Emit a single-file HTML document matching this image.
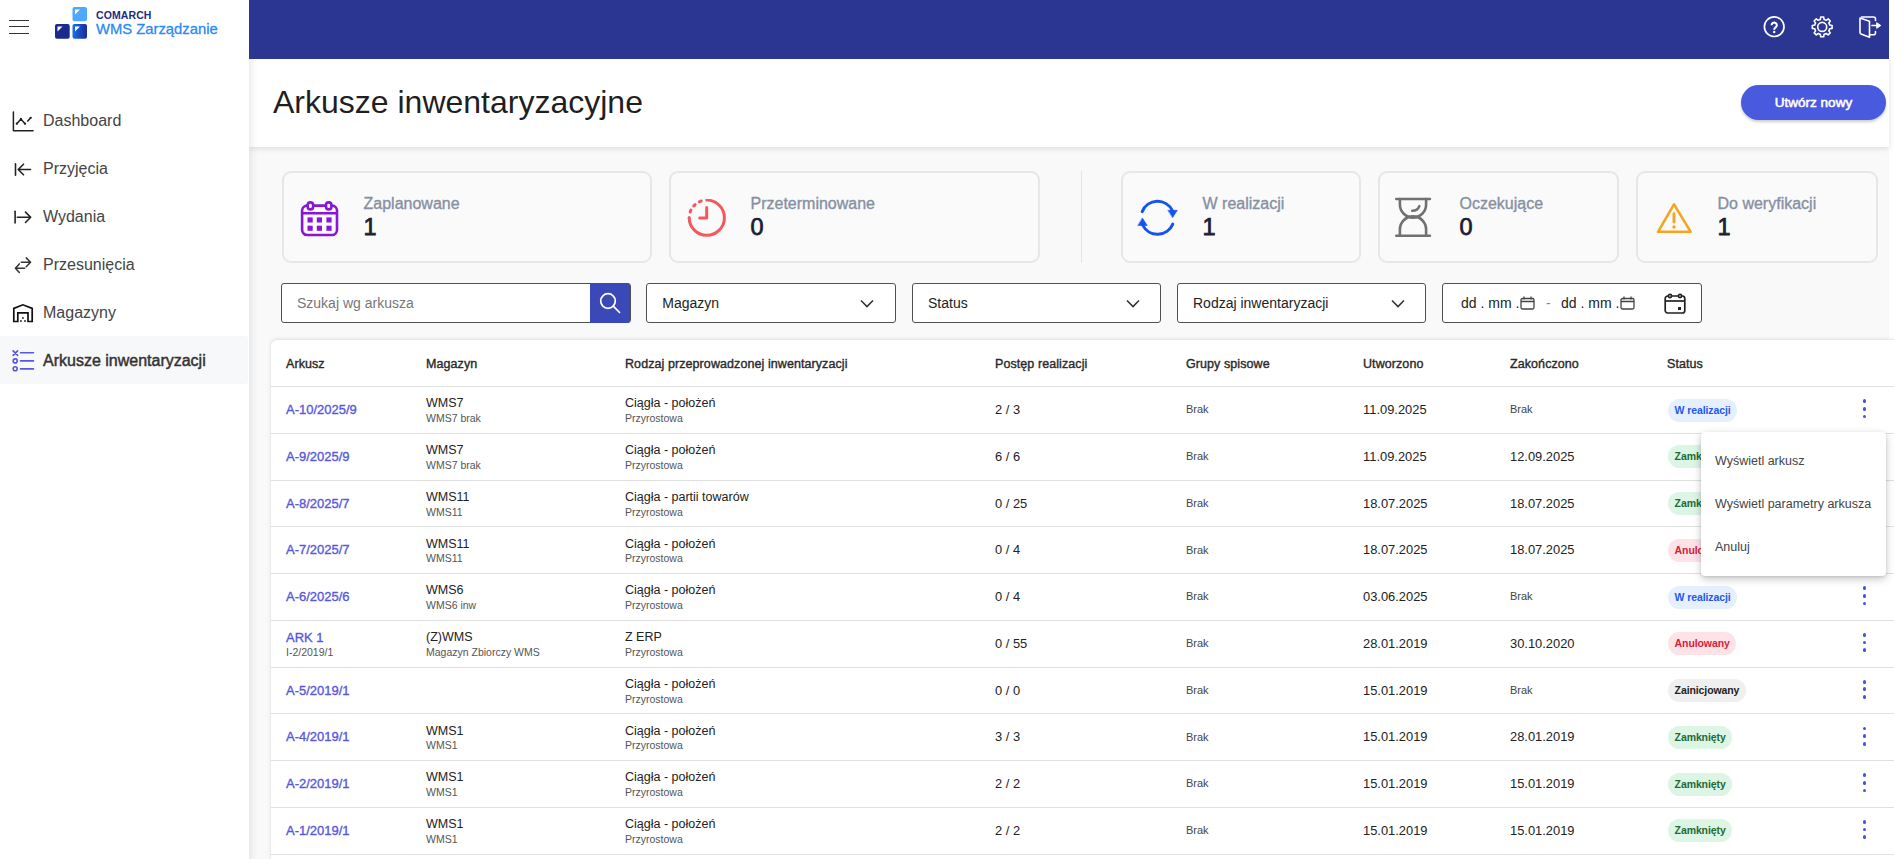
<!DOCTYPE html>
<html><head><meta charset="utf-8">
<style>
*{box-sizing:border-box;margin:0;padding:0}
html,body{width:1894px;height:859px;overflow:hidden;background:#fff;font-family:"Liberation Sans",sans-serif;color:#222}
.abs{position:absolute}
#side{position:absolute;left:0;top:0;width:249px;height:859px;background:#fff;z-index:3}
#main{position:absolute;left:249px;top:0;width:1640px;height:859px;background:#f9f9f9;overflow:visible}
#topbar{position:absolute;left:249px;top:0;width:1640px;height:59px;background:#2b3592;z-index:4}
#titlebar{position:absolute;left:249px;top:59px;width:1640px;height:88px;background:#fff;box-shadow:0 1px 6px rgba(0,0,0,.14);z-index:2}
#shade{position:absolute;left:249px;top:59px;width:9px;height:800px;background:linear-gradient(to right,rgba(0,0,0,.065),rgba(0,0,0,.03) 40%,rgba(0,0,0,0));z-index:5}
.nav{position:absolute;left:0;width:249px;height:48px}
.nav .t{position:absolute;left:43px;top:15.5px;font-size:16px;color:#444;white-space:nowrap}
.nav svg{position:absolute;left:11px;top:13px}
.card{position:absolute;top:171px;height:92px;background:#fafafa;border:2px solid #e5e7eb;border-radius:9px}
.card .lbl{position:absolute;top:22px;margin-left:-0.5px;font-size:16px;color:#8690a3;white-space:nowrap;-webkit-text-stroke:0.35px #8690a3}
.card .val{position:absolute;top:40.5px;margin-left:-0.5px;font-size:23.5px;color:#1c2033;-webkit-text-stroke:0.75px #1c2033}
.card svg{position:absolute;margin:-0.5px 0 0 -0.5px}
.inp{position:absolute;top:283px;height:40px;background:#fff;border:1.3px solid #505050;border-radius:3px}
.inp .t{position:absolute;left:15px;top:11px;font-size:14px;color:#222;white-space:nowrap}
.inp svg{position:absolute}
#table{position:absolute;left:271px;top:340px;width:1640px;height:540px;background:#fff;border-radius:6px;box-shadow:0 -1px 4px rgba(0,0,0,.09),0 0 2px rgba(0,0,0,.08)}
.hd{position:absolute;font-size:12px;color:#2a2a2a;white-space:nowrap;line-height:1;-webkit-text-stroke:0.38px #2a2a2a;letter-spacing:0.08px}
.line{position:absolute;left:0;width:1640px;height:1px;background:#e0e0e0}
.c1{position:absolute;font-size:12.5px;color:#222;white-space:nowrap;line-height:1}
.c2{position:absolute;font-size:10.5px;color:#555;white-space:nowrap;line-height:1}
.c3{position:absolute;color:#444;white-space:nowrap;line-height:1}
.lnk{position:absolute;font-size:12.5px;color:#5658dc;white-space:nowrap;line-height:1;-webkit-text-stroke:0.35px #5658dc}
.badge{position:absolute;height:23px;border-radius:12px;font-size:10.5px;font-weight:bold;line-height:23px;padding:0 6.6px;white-space:nowrap;letter-spacing:-0.1px}
.b-blue{background:#e6effe;color:#1f58f0}
.b-green{background:#dcf5e5;color:#1c6b35}
.b-red{background:#fde3e7;color:#da1b3a}
.b-gray{background:#efefef;color:#222}
.kebab{position:absolute;width:4px;height:18px}
.kebab i{position:absolute;left:0;width:3.7px;height:3.7px;border-radius:50%;background:#4653e3}
#menu{position:absolute;left:1701px;top:432px;width:185px;height:144px;background:#fff;border-radius:4px;box-shadow:0 3px 8px rgba(0,0,0,.22),0 1px 3px rgba(0,0,0,.1);z-index:6}
#menu div{position:absolute;left:14px;font-size:12.5px;color:#444;white-space:nowrap;line-height:1}
</style></head><body>

<div id="side">
  <!-- hamburger -->
  <div class="abs" style="left:9px;top:19.5px;width:20px;height:1.4px;background:#333"></div>
  <div class="abs" style="left:9px;top:26px;width:20px;height:1.4px;background:#333"></div>
  <div class="abs" style="left:9px;top:32.5px;width:20px;height:1.4px;background:#333"></div>
  <!-- logo -->
  <svg class="abs" style="left:55px;top:7px" width="33" height="32" viewBox="0 0 33 32">
    <defs><linearGradient id="lg" x1="0" y1="0" x2="1" y2="0"><stop offset="0" stop-color="#1a6fe6"/><stop offset="1" stop-color="#1b2a9a"/></linearGradient></defs>
    <rect x="17.5" y="0" width="14.5" height="14.3" rx="2" fill="#4fa8ff"/>
    <path d="M20 2.5h5l-5 5z" fill="#fff"/>
    <rect x="0" y="17" width="14.7" height="14.7" rx="2" fill="#1b2a8f"/>
    <path d="M2.5 19.5h5l-5 5z" fill="#fff"/>
    <rect x="17.5" y="17" width="14.5" height="14.7" rx="2" fill="url(#lg)"/>
    <path d="M20 19.5h5l-5 5z" fill="#fff"/>
  </svg>
  <div class="abs" style="left:96px;top:9px;font-size:10.5px;font-weight:bold;color:#1f2b82;letter-spacing:0.1px">COMARCH</div>
  <div class="abs" style="left:96px;top:21.2px;font-size:14.8px;color:#2a8af6;white-space:nowrap;-webkit-text-stroke:0.3px #2a8af6">WMS Zarządzanie</div>

  <div class="nav" style="top:96px">
    <svg width="24" height="24" viewBox="0 0 24 24" fill="none" stroke="#222" stroke-width="1.5" stroke-linecap="round" stroke-linejoin="round"><path d="M2.4 3v18.7h19.7"/><path d="M5.8 14.7L9.9 9.9L14 14.7"/><path d="M16.8 12.1L19.7 8.8"/><g fill="#222" stroke="none"><circle cx="5.8" cy="14.7" r="1.1"/><circle cx="9.9" cy="9.9" r="1.1"/><circle cx="14" cy="14.7" r="1.1"/><circle cx="19.7" cy="8.8" r="1.1"/></g></svg>
    <div class="t">Dashboard</div>
  </div>
  <div class="nav" style="top:144px">
    <svg width="24" height="24" viewBox="0 0 24 24" fill="none" stroke="#222" stroke-width="1.6" stroke-linecap="round" stroke-linejoin="round"><path d="M4.5 6.8v11.4"/><path d="M19.5 12.5H7.2M12.5 7.2L7.2 12.5L12.5 17.8"/></svg>
    <div class="t">Przyjęcia</div>
  </div>
  <div class="nav" style="top:192px">
    <svg width="24" height="24" viewBox="0 0 24 24" fill="none" stroke="#222" stroke-width="1.6" stroke-linecap="round" stroke-linejoin="round"><path d="M4.1 6.3v11.7"/><path d="M6.3 12.3h13.4M14.5 7.1l5.2 5.2-5.2 5.2"/></svg>
    <div class="t">Wydania</div>
  </div>
  <div class="nav" style="top:240px">
    <svg width="24" height="24" viewBox="0 0 24 24" fill="none" stroke="#333" stroke-width="1.5" stroke-linecap="round" stroke-linejoin="round"><path d="M10.3 9.2h9.2M15.2 4.9l4.4 4.3-4.4 4.5"/><path d="M4.5 15.3h9.1M8.3 10.9l-3.9 4.4 3.9 4.1"/></svg>
    <div class="t">Przesunięcia</div>
  </div>
  <div class="nav" style="top:288px">
    <svg width="24" height="24" viewBox="0 0 24 24" fill="none" stroke="#111" stroke-width="1.7" stroke-linejoin="miter"><path d="M2.8 20.5V7.4L11.9 3.8L21.2 7.4V20.5H17V11.9H6.8V20.5Z"/><g fill="#111" stroke="none"><rect x="11.1" y="16.2" width="1.6" height="1.6"/><rect x="9.1" y="19.2" width="1.6" height="1.6"/><rect x="13.2" y="19.2" width="1.6" height="1.6"/></g></svg>
    <div class="t">Magazyny</div>
  </div>
  <div class="nav" style="top:336px;background:#f7f8fa;border-radius:0 3px 3px 0;width:248px">
    <svg width="24" height="24" viewBox="0 0 24 24" fill="none" stroke="#5656e0" stroke-width="1.6" stroke-linecap="round"><path d="M2.1 1.9l4.5 4.5M6.6 1.9l-4.5 4.5"/><circle cx="4.2" cy="11.9" r="2"/><circle cx="4.2" cy="19.7" r="2"/><path d="M9.5 3.8h13M9.5 11.9h13M9.5 19.9h13"/></svg>
    <div class="t" style="color:#333;-webkit-text-stroke:0.45px #333">Arkusze inwentaryzacji</div>
  </div>
</div>

<div id="main"></div>
<div id="topbar"></div>
<div id="titlebar">
  <div class="abs" style="left:24px;top:25px;font-size:32px;color:#1f1f1f;white-space:nowrap">Arkusze inwentaryzacyjne</div>
  <div class="abs" style="left:1492px;top:26px;width:145px;height:35px;border-radius:18px;background:#4a5ade;box-shadow:0 2px 3px rgba(0,0,0,.2);color:#fff;font-size:13.5px;-webkit-text-stroke:0.55px #fff;text-align:center;line-height:36px">Utwórz nowy</div>
</div>
<div id="shade"></div>

<!-- header icons -->
<svg class="abs" style="left:1762px;top:15px;z-index:6" width="24" height="24" viewBox="0 0 24 24" fill="none" stroke="#fff"><circle cx="12.2" cy="11.7" r="9.8" stroke-width="1.7"/><path d="M9.6 10.2a2.6 2.6 0 1 1 4 2.2c-.9.6-1.4 1-1.4 2.1v.3" stroke-width="2.1"/><circle cx="12.2" cy="16.9" r="1.25" fill="#fff" stroke="none"/></svg>
<svg class="abs" style="left:1810px;top:15px;z-index:6" width="24" height="24" viewBox="0 0 24 24" fill="none" stroke="#fff" stroke-width="1.6" stroke-linejoin="round"><path d="M10.34 4.43L10.72 2.01L13.68 2.01L14.06 4.43A7.7 7.7 0 0 1 16.17 5.30L18.15 3.86L20.24 5.95L18.80 7.93A7.7 7.7 0 0 1 19.67 10.04L22.09 10.42L22.09 13.38L19.67 13.76A7.7 7.7 0 0 1 18.80 15.87L20.24 17.85L18.15 19.94L16.17 18.50A7.7 7.7 0 0 1 14.06 19.37L13.68 21.79L10.72 21.79L10.34 19.37A7.7 7.7 0 0 1 8.23 18.50L6.25 19.94L4.16 17.85L5.60 15.87A7.7 7.7 0 0 1 4.73 13.76L2.31 13.38L2.31 10.42L4.73 10.04A7.7 7.7 0 0 1 5.60 7.93L4.16 5.95L6.25 3.86L8.23 5.30A7.7 7.7 0 0 1 10.34 4.43Z"/><circle cx="12.2" cy="11.9" r="4.5"/></svg>
<svg class="abs" style="left:1858px;top:15px;z-index:6" width="26" height="24" viewBox="0 0 26 24" fill="none" stroke="#fff" stroke-width="1.6" stroke-linejoin="round" stroke-linecap="round"><path d="M3.5 2H15.5a2 2 0 0 1 2 2V5.5"/><path d="M17.5 16.5V17.8a2 2 0 0 1-2 2H12"/><path d="M2 3L11.5 6.3V22.2L3 19a1.5 1.5 0 0 1-1-1.4z"/><path d="M14 10.5h5.2"/><path d="M19 7.9L22.8 10.5L19 13.1z" fill="#fff" stroke-width="1"/></svg>

<!-- cards -->
<div class="card" style="left:282px;width:370px">
  <svg style="left:16px;top:27px" width="40" height="40" viewBox="0 0 40 40" fill="none" stroke="#8716d8" stroke-width="2.6"><rect x="2.1" y="5.6" width="34.9" height="29.4" rx="5"/><path d="M2.1 13.2h34.9"/><rect x="7.7" y="2.4" width="5.4" height="7" rx="2.7" fill="#fafafa"/><rect x="26" y="2.4" width="5.4" height="7" rx="2.7" fill="#fafafa"/><g fill="#8716d8" stroke="none"><rect x="7.5" y="17.4" width="5.2" height="5.1"/><rect x="16.8" y="17.4" width="5.2" height="5.1"/><rect x="26.4" y="17.4" width="5.2" height="5.1"/><rect x="7.5" y="25.7" width="5.2" height="5.1"/><rect x="16.8" y="25.7" width="5.2" height="5.1"/><rect x="26.4" y="25.7" width="5.2" height="5.1"/></g></svg>
  <div class="lbl" style="left:80px">Zaplanowane</div><div class="val" style="left:80px">1</div>
</div>
<div class="card" style="left:669px;width:371px">
  <svg style="left:16px;top:26px" width="40" height="40" viewBox="0 0 40 40" fill="none" stroke="#f4585c" stroke-width="3" stroke-linecap="round"><path d="M19.8 1.0999999999999979A17.6 17.6 0 1 1 2.1999999999999993 18.7"/><path d="M2.1999999999999993 18.7A17.6 17.6 0 0 1 19.8 1.0999999999999979" stroke-dasharray="0 5.8 2 5 2 5 2 20"/><path d="M19.7 8.5V19H12.7" stroke-linejoin="round"/></svg>
  <div class="lbl" style="left:80px">Przeterminowane</div><div class="val" style="left:80px">0</div>
</div>
<div class="abs" style="left:1080.5px;top:171px;width:1.5px;height:92px;background:#e3e5ea"></div>
<div class="card" style="left:1121px;width:240px">
  <svg style="left:13.5px;top:23.5px" width="44" height="44" viewBox="0 0 44 44" fill="none" stroke="#1553f0" stroke-width="3" stroke-linecap="round"><path d="M6.20 15.62A16.5 16.5 0 0 1 36.38 14.67"/><path d="M36.77 28.06A16.5 16.5 0 0 1 6.72 29.14"/><path d="M32.2 14.3h9.1l-4.6 7.1z" fill="#1553f0" stroke="#1553f0" stroke-width="0.6" stroke-linejoin="round"/><path d="M2.1 29.4h9.1l-4.6-7.1z" fill="#1553f0" stroke="#1553f0" stroke-width="0.6" stroke-linejoin="round"/></svg>
  <div class="lbl" style="left:80px">W realizacji</div><div class="val" style="left:80px">1</div>
</div>
<div class="card" style="left:1378px;width:241px">
  <svg style="left:13.5px;top:23.5px" width="40" height="44" viewBox="0 0 40 44" fill="none" stroke="#717171" stroke-width="2.6" stroke-linecap="round"><path d="M3.3 3h33.6M3.3 39.8h33.6"/><path d="M6.9 3V8.5A13.1 13.1 0 0 0 33.1 8.5V3"/><path d="M6.9 39.8V33.5A13.1 13.1 0 0 1 33.1 33.5V39.8"/><path d="M19.2 14.8A7.5 7.5 0 0 0 26.4 10" stroke-width="2.4"/></svg>
  <div class="lbl" style="left:80px">Oczekujące</div><div class="val" style="left:80px">0</div>
</div>
<div class="card" style="left:1636px;width:242px">
  <svg style="left:18px;top:29px" width="38" height="34" viewBox="0 0 38 34" fill="none" stroke="#f4a520" stroke-width="2.6" stroke-linejoin="round"><path d="M18 2.3L2 29.8h32.7z"/><path d="M18 11.6v8.5" stroke-width="2.9" stroke-linecap="round"/><circle cx="18" cy="25" r="1.7" fill="#f4a520" stroke="none"/></svg>
  <div class="lbl" style="left:80px">Do weryfikacji</div><div class="val" style="left:80px">1</div>
</div>

<!-- filters -->
<div class="inp" style="left:281px;width:350px">
  <div class="t" style="color:#777">Szukaj wg arkusza</div>
  <div class="abs" style="left:307.8px;top:-1.3px;width:40.5px;height:40px;background:#3a48b8;border-radius:0 3px 3px 0"></div>
  <svg style="left:312.3px;top:2px" width="30" height="32" viewBox="0 0 30 32" fill="none" stroke="#fff" stroke-width="1.7"><circle cx="14" cy="15" r="7.3"/><path d="M19.3 20.2l6.3 6.3" stroke-linecap="round"/></svg>
</div>
<div class="inp" style="left:646.3px;width:249.5px"><div class="t">Magazyn</div>
  <svg style="left:213px;top:15px" width="14" height="9" viewBox="0 0 14 9" fill="none" stroke="#333" stroke-width="1.6"><path d="M1 1.5l6 6 6-6"/></svg></div>
<div class="inp" style="left:912px;width:249px"><div class="t">Status</div>
  <svg style="left:213px;top:15px" width="14" height="9" viewBox="0 0 14 9" fill="none" stroke="#333" stroke-width="1.6"><path d="M1 1.5l6 6 6-6"/></svg></div>
<div class="inp" style="left:1177px;width:249px"><div class="t">Rodzaj inwentaryzacji</div>
  <svg style="left:213px;top:15px" width="14" height="9" viewBox="0 0 14 9" fill="none" stroke="#333" stroke-width="1.6"><path d="M1 1.5l6 6 6-6"/></svg></div>
<div class="inp" style="left:1442px;width:260px">
  <div class="t" style="left:18px">dd . mm .</div>
  <svg style="left:77px;top:12px" width="15" height="14" viewBox="0 0 15 14" fill="none" stroke="#444" stroke-width="1.3"><rect x="1" y="2.5" width="13" height="10.5" rx="1.5"/><path d="M1 5.5h13M4 0.5v3M11 0.5v3"/></svg>
  <div class="t" style="left:103px;color:#888">-</div>
  <div class="t" style="left:118px">dd . mm .</div>
  <svg style="left:177px;top:12px" width="15" height="14" viewBox="0 0 15 14" fill="none" stroke="#444" stroke-width="1.3"><rect x="1" y="2.5" width="13" height="10.5" rx="1.5"/><path d="M1 5.5h13M4 0.5v3M11 0.5v3"/></svg>
  <svg style="left:221px;top:9px" width="22" height="21" viewBox="0 0 22 21" fill="none" stroke="#222" stroke-width="1.7"><rect x="1.2" y="3" width="19.6" height="17" rx="2.5"/><path d="M1.2 8h19.6"/><circle cx="6" cy="3" r="1.6" fill="#fff"/><circle cx="16" cy="3" r="1.6" fill="#fff"/><rect x="14" y="14" width="3" height="3" fill="#222" stroke="none"/></svg>
</div>


<!--TABLE-->
<div id="table">
<div class="hd" style="left:15.00px;top:18.42px;font-size:12.5px">Arkusz</div>
<div class="hd" style="left:155.00px;top:18.42px;font-size:12.5px">Magazyn</div>
<div class="hd" style="left:354.00px;top:18.42px;font-size:12.5px">Rodzaj przeprowadzonej inwentaryzacji</div>
<div class="hd" style="left:724.00px;top:18.42px;font-size:12.5px">Postęp realizacji</div>
<div class="hd" style="left:915.00px;top:18.42px;font-size:12.5px">Grupy spisowe</div>
<div class="hd" style="left:1092.00px;top:18.42px;font-size:12.5px">Utworzono</div>
<div class="hd" style="left:1239.00px;top:18.42px;font-size:12.5px">Zakończono</div>
<div class="hd" style="left:1396.00px;top:18.42px;font-size:12.5px">Status</div>
<div class="line" style="top:46.00px"></div>
<div class="lnk" style="left:15.00px;top:63.00px;font-size:13px">A-10/2025/9</div>
<div class="c1" style="left:155.00px;top:57.42px;font-size:12.5px">WMS7</div>
<div class="c2" style="left:155.00px;top:73.11px;font-size:10.5px">WMS7 brak</div>
<div class="c1" style="left:354.00px;top:57.42px;font-size:12.5px">Ciągła - położeń</div>
<div class="c2" style="left:354.00px;top:73.11px;font-size:10.5px">Przyrostowa</div>
<div class="c1" style="left:724.00px;top:64.08px;font-size:12.9px">2 / 3</div>
<div class="c3" style="left:915.00px;top:64.39px;font-size:11px">Brak</div>
<div class="c1" style="left:1092.00px;top:64.08px;font-size:12.9px">11.09.2025</div>
<div class="c3" style="left:1239.00px;top:64.39px;font-size:11px">Brak</div>
<div class="badge b-blue" style="left:1397px;top:58.70px">W realizacji</div>
<div class="kebab" style="left:1591.80px;top:59.40px"><i style="top:0"></i><i style="top:7.6px"></i><i style="top:15.2px"></i></div>
<div class="line" style="top:92.75px"></div>
<div class="lnk" style="left:15.00px;top:109.75px;font-size:13px">A-9/2025/9</div>
<div class="c1" style="left:155.00px;top:104.17px;font-size:12.5px">WMS7</div>
<div class="c2" style="left:155.00px;top:119.86px;font-size:10.5px">WMS7 brak</div>
<div class="c1" style="left:354.00px;top:104.17px;font-size:12.5px">Ciągła - położeń</div>
<div class="c2" style="left:354.00px;top:119.86px;font-size:10.5px">Przyrostowa</div>
<div class="c1" style="left:724.00px;top:110.83px;font-size:12.9px">6 / 6</div>
<div class="c3" style="left:915.00px;top:111.14px;font-size:11px">Brak</div>
<div class="c1" style="left:1092.00px;top:110.83px;font-size:12.9px">11.09.2025</div>
<div class="c1" style="left:1239.00px;top:110.83px;font-size:12.9px">12.09.2025</div>
<div class="badge b-green" style="left:1397px;top:105.45px">Zamknięty</div>
<div class="line" style="top:139.50px"></div>
<div class="lnk" style="left:15.00px;top:156.50px;font-size:13px">A-8/2025/7</div>
<div class="c1" style="left:155.00px;top:150.92px;font-size:12.5px">WMS11</div>
<div class="c2" style="left:155.00px;top:166.61px;font-size:10.5px">WMS11</div>
<div class="c1" style="left:354.00px;top:150.92px;font-size:12.5px">Ciągła - partii towarów</div>
<div class="c2" style="left:354.00px;top:166.61px;font-size:10.5px">Przyrostowa</div>
<div class="c1" style="left:724.00px;top:157.58px;font-size:12.9px">0 / 25</div>
<div class="c3" style="left:915.00px;top:157.89px;font-size:11px">Brak</div>
<div class="c1" style="left:1092.00px;top:157.58px;font-size:12.9px">18.07.2025</div>
<div class="c1" style="left:1239.00px;top:157.58px;font-size:12.9px">18.07.2025</div>
<div class="badge b-green" style="left:1397px;top:152.20px">Zamknięty</div>
<div class="line" style="top:186.25px"></div>
<div class="lnk" style="left:15.00px;top:203.25px;font-size:13px">A-7/2025/7</div>
<div class="c1" style="left:155.00px;top:197.67px;font-size:12.5px">WMS11</div>
<div class="c2" style="left:155.00px;top:213.36px;font-size:10.5px">WMS11</div>
<div class="c1" style="left:354.00px;top:197.67px;font-size:12.5px">Ciągła - położeń</div>
<div class="c2" style="left:354.00px;top:213.36px;font-size:10.5px">Przyrostowa</div>
<div class="c1" style="left:724.00px;top:204.33px;font-size:12.9px">0 / 4</div>
<div class="c3" style="left:915.00px;top:204.64px;font-size:11px">Brak</div>
<div class="c1" style="left:1092.00px;top:204.33px;font-size:12.9px">18.07.2025</div>
<div class="c1" style="left:1239.00px;top:204.33px;font-size:12.9px">18.07.2025</div>
<div class="badge b-red" style="left:1397px;top:198.95px">Anulowany</div>
<div class="line" style="top:233.00px"></div>
<div class="lnk" style="left:15.00px;top:250.00px;font-size:13px">A-6/2025/6</div>
<div class="c1" style="left:155.00px;top:244.42px;font-size:12.5px">WMS6</div>
<div class="c2" style="left:155.00px;top:260.11px;font-size:10.5px">WMS6 inw</div>
<div class="c1" style="left:354.00px;top:244.42px;font-size:12.5px">Ciągła - położeń</div>
<div class="c2" style="left:354.00px;top:260.11px;font-size:10.5px">Przyrostowa</div>
<div class="c1" style="left:724.00px;top:251.08px;font-size:12.9px">0 / 4</div>
<div class="c3" style="left:915.00px;top:251.39px;font-size:11px">Brak</div>
<div class="c1" style="left:1092.00px;top:251.08px;font-size:12.9px">03.06.2025</div>
<div class="c3" style="left:1239.00px;top:251.39px;font-size:11px">Brak</div>
<div class="badge b-blue" style="left:1397px;top:245.70px">W realizacji</div>
<div class="kebab" style="left:1591.80px;top:246.40px"><i style="top:0"></i><i style="top:7.6px"></i><i style="top:15.2px"></i></div>
<div class="line" style="top:279.75px"></div>
<div class="lnk" style="left:15.00px;top:290.75px;font-size:13px">ARK 1</div>
<div class="c2" style="left:15.00px;top:306.86px;font-size:10.5px">I-2/2019/1</div>
<div class="c1" style="left:155.00px;top:291.17px;font-size:12.5px">(Z)WMS</div>
<div class="c2" style="left:155.00px;top:306.86px;font-size:10.5px">Magazyn Zbiorczy WMS</div>
<div class="c1" style="left:354.00px;top:291.17px;font-size:12.5px">Z ERP</div>
<div class="c2" style="left:354.00px;top:306.86px;font-size:10.5px">Przyrostowa</div>
<div class="c1" style="left:724.00px;top:297.83px;font-size:12.9px">0 / 55</div>
<div class="c3" style="left:915.00px;top:298.14px;font-size:11px">Brak</div>
<div class="c1" style="left:1092.00px;top:297.83px;font-size:12.9px">28.01.2019</div>
<div class="c1" style="left:1239.00px;top:297.83px;font-size:12.9px">30.10.2020</div>
<div class="badge b-red" style="left:1397px;top:292.45px">Anulowany</div>
<div class="kebab" style="left:1591.80px;top:293.15px"><i style="top:0"></i><i style="top:7.6px"></i><i style="top:15.2px"></i></div>
<div class="line" style="top:326.50px"></div>
<div class="lnk" style="left:15.00px;top:343.50px;font-size:13px">A-5/2019/1</div>
<div class="c1" style="left:354.00px;top:337.92px;font-size:12.5px">Ciągła - położeń</div>
<div class="c2" style="left:354.00px;top:353.61px;font-size:10.5px">Przyrostowa</div>
<div class="c1" style="left:724.00px;top:344.58px;font-size:12.9px">0 / 0</div>
<div class="c3" style="left:915.00px;top:344.89px;font-size:11px">Brak</div>
<div class="c1" style="left:1092.00px;top:344.58px;font-size:12.9px">15.01.2019</div>
<div class="c3" style="left:1239.00px;top:344.89px;font-size:11px">Brak</div>
<div class="badge b-gray" style="left:1397px;top:339.20px">Zainicjowany</div>
<div class="kebab" style="left:1591.80px;top:339.90px"><i style="top:0"></i><i style="top:7.6px"></i><i style="top:15.2px"></i></div>
<div class="line" style="top:373.25px"></div>
<div class="lnk" style="left:15.00px;top:390.25px;font-size:13px">A-4/2019/1</div>
<div class="c1" style="left:155.00px;top:384.67px;font-size:12.5px">WMS1</div>
<div class="c2" style="left:155.00px;top:400.36px;font-size:10.5px">WMS1</div>
<div class="c1" style="left:354.00px;top:384.67px;font-size:12.5px">Ciągła - położeń</div>
<div class="c2" style="left:354.00px;top:400.36px;font-size:10.5px">Przyrostowa</div>
<div class="c1" style="left:724.00px;top:391.33px;font-size:12.9px">3 / 3</div>
<div class="c3" style="left:915.00px;top:391.64px;font-size:11px">Brak</div>
<div class="c1" style="left:1092.00px;top:391.33px;font-size:12.9px">15.01.2019</div>
<div class="c1" style="left:1239.00px;top:391.33px;font-size:12.9px">28.01.2019</div>
<div class="badge b-green" style="left:1397px;top:385.95px">Zamknięty</div>
<div class="kebab" style="left:1591.80px;top:386.65px"><i style="top:0"></i><i style="top:7.6px"></i><i style="top:15.2px"></i></div>
<div class="line" style="top:420.00px"></div>
<div class="lnk" style="left:15.00px;top:437.00px;font-size:13px">A-2/2019/1</div>
<div class="c1" style="left:155.00px;top:431.42px;font-size:12.5px">WMS1</div>
<div class="c2" style="left:155.00px;top:447.11px;font-size:10.5px">WMS1</div>
<div class="c1" style="left:354.00px;top:431.42px;font-size:12.5px">Ciągła - położeń</div>
<div class="c2" style="left:354.00px;top:447.11px;font-size:10.5px">Przyrostowa</div>
<div class="c1" style="left:724.00px;top:438.08px;font-size:12.9px">2 / 2</div>
<div class="c3" style="left:915.00px;top:438.39px;font-size:11px">Brak</div>
<div class="c1" style="left:1092.00px;top:438.08px;font-size:12.9px">15.01.2019</div>
<div class="c1" style="left:1239.00px;top:438.08px;font-size:12.9px">15.01.2019</div>
<div class="badge b-green" style="left:1397px;top:432.70px">Zamknięty</div>
<div class="kebab" style="left:1591.80px;top:433.40px"><i style="top:0"></i><i style="top:7.6px"></i><i style="top:15.2px"></i></div>
<div class="line" style="top:466.75px"></div>
<div class="lnk" style="left:15.00px;top:483.75px;font-size:13px">A-1/2019/1</div>
<div class="c1" style="left:155.00px;top:478.17px;font-size:12.5px">WMS1</div>
<div class="c2" style="left:155.00px;top:493.86px;font-size:10.5px">WMS1</div>
<div class="c1" style="left:354.00px;top:478.17px;font-size:12.5px">Ciągła - położeń</div>
<div class="c2" style="left:354.00px;top:493.86px;font-size:10.5px">Przyrostowa</div>
<div class="c1" style="left:724.00px;top:484.83px;font-size:12.9px">2 / 2</div>
<div class="c3" style="left:915.00px;top:485.14px;font-size:11px">Brak</div>
<div class="c1" style="left:1092.00px;top:484.83px;font-size:12.9px">15.01.2019</div>
<div class="c1" style="left:1239.00px;top:484.83px;font-size:12.9px">15.01.2019</div>
<div class="badge b-green" style="left:1397px;top:479.45px">Zamknięty</div>
<div class="kebab" style="left:1591.80px;top:480.15px"><i style="top:0"></i><i style="top:7.6px"></i><i style="top:15.2px"></i></div>
<div class="line" style="top:513.50px"></div>
</div>
<div id="menu">
<div style="top:23.42px">Wyświetl arkusz</div>
<div style="top:66.02px">Wyświetl parametry arkusza</div>
<div style="top:108.92px">Anuluj</div>
</div>
<!--/TABLE-->
</body></html>
